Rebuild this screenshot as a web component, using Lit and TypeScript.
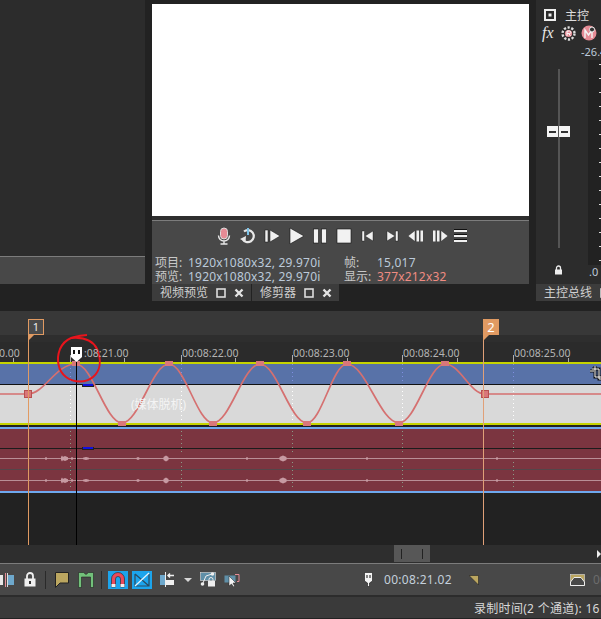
import { LitElement, html, css, svg } from 'lit';
import { customElement } from 'lit/decorators.js';

// key frames of the fade curve on the timeline canvas (canvas top is y=311 on the page)
const TOP = 311;
const PEAK = 364 - TOP;
const TROUGH = 423 - TOP;
const MID = 394 - TOP;
const curveXs = [76, 122, 169, 213, 260, 307, 347, 399, 445];
const majors = [70, 181, 292, 402, 513];
const minors = [13, 124, 235, 347, 457, 568];
const ticks = [4, 18, 32, 46, 60, 74, 88, 102, 116, 130, 144, 158, 172, 186, 200];
const stamps: [string, number][] = [
  ['0.00', -1],
  [':08:21.00', 84],
  ['00:08:22.00', 182],
  ['00:08:23.00', 293],
  ['00:08:24.00', 403],
  ['00:08:25.00', 514],
];
// small audio peaks: x, half width, half height
const blips = [
  [46, 1, 1.5], [62, 1, 3], [65, 3, 2.5], [72, 1, 1.5], [86, 3, 1.5], [138, 1.5, 1.5],
  [166, 2.5, 3], [247, 1, 1.5], [283, 3.5, 3], [367, 1, 1.5], [497, 1, 1.5],
];

function curvePath(): string {
  let d = `M0 ${MID} L28 ${MID} C44 ${MID} 56 ${PEAK} ${curveXs[0]} ${PEAK}`;
  for (let i = 1; i < curveXs.length; i++) {
    const a = curveXs[i - 1];
    const b = curveXs[i];
    const y = i % 2 ? TROUGH : PEAK;
    const prev = i % 2 ? PEAK : TROUGH;
    const k = (b - a) * 0.36;
    d += ` C${a + k} ${prev} ${b - k} ${y} ${b} ${y}`;
  }
  d += ` C460 ${PEAK} 470 ${MID} 485 ${MID} L601 ${MID}`;
  return d;
}

const squareIcon = html`<svg class="ico" width="10" height="10" viewBox="0 0 10 10"><rect x="1" y="1" width="8" height="8" fill="none" stroke="#ddd" stroke-width="1.600"/></svg>`;
const closeIcon = html`<svg class="ico" width="10" height="10" viewBox="0 0 10 10"><path d="M1.500 1.500 L8.500 8.500 M8.500 1.500 L1.500 8.500" stroke="#e4e4e4" stroke-width="2.400"/></svg>`;

const transport = [
  svg`<rect x="6.500" y="2" width="7" height="11" rx="3.500" fill="#e58b95" stroke="#ddd"/><path d="M4.500 9.500 a5.500 5.500 0 0 0 11 0 M10 15 V18 M6.500 18 H13.500" fill="none" stroke="#e8e8e8" stroke-width="1.400"/>`,
  svg`<path d="M6 5.500 A6 6 0 1 1 4.500 13" fill="none" stroke="#e8e8e8" stroke-width="2.200"/><path d="M2 13 L8 10 L7.500 16 Z" fill="#e8e8e8"/><rect x="9" y="2" width="2" height="7" fill="#7fc4e8"/>`,
  svg`<rect x="3" y="4" width="3" height="12" fill="#f0f0f0" stroke="#111" stroke-width=".5"/><path d="M8 4 L18 10 L8 16 Z" fill="#f0f0f0" stroke="#111" stroke-width=".5"/>`,
  svg`<path d="M4 2 L18 10 L4 18 Z" fill="#f2f2f2" stroke="#111" stroke-width=".6"/>`,
  svg`<rect x="3.500" y="3" width="5" height="14" fill="#f2f2f2" stroke="#111" stroke-width=".6"/><rect x="11.500" y="3" width="5" height="14" fill="#f2f2f2" stroke="#111" stroke-width=".6"/>`,
  svg`<rect x="3" y="3" width="14" height="14" fill="#f2f2f2" stroke="#111" stroke-width=".6"/>`,
  svg`<rect x="4" y="5" width="2.500" height="10" fill="#f0f0f0" stroke="#111" stroke-width=".4"/><path d="M15 5 V15 L7 10 Z" fill="#f0f0f0" stroke="#111" stroke-width=".4"/>`,
  svg`<rect x="13.500" y="5" width="2.500" height="10" fill="#f0f0f0" stroke="#111" stroke-width=".4"/><path d="M5 5 V15 L13 10 Z" fill="#f0f0f0" stroke="#111" stroke-width=".4"/>`,
  svg`<path d="M9 4.500 V15.500 L2 10 Z" fill="#f0f0f0" stroke="#111" stroke-width=".4"/><rect x="10.500" y="4.500" width="2.500" height="11" fill="#f0f0f0"/><rect x="14.500" y="4.500" width="2.500" height="11" fill="#f0f0f0"/>`,
  svg`<rect x="3" y="4.500" width="2.500" height="11" fill="#f0f0f0"/><rect x="7" y="4.500" width="2.500" height="11" fill="#f0f0f0"/><path d="M11 4.500 V15.500 L18 10 Z" fill="#f0f0f0" stroke="#111" stroke-width=".4"/>`,
];

@customElement('app-root')
export class AppRoot extends LitElement {
  static override styles = css`
    :host {
      display: block;
      width: 601px;
      height: 619px;
      overflow: hidden;
      background: #222;
      color: #c8c8c8;
      font: 12px "Noto Sans", "Noto Sans CJK SC", sans-serif;
    }
    .top { display: flex; height: 301px; margin-bottom: 10px; }
    .left { width: 145px; display: flex; flex-direction: column; height: 284px; margin-right: 7px; }
    .left-fill { flex: 1; background: #2c2c2c; }
    .left-bar { height: 27px; background: #484848; border-top: 1px solid #7c7c7c; }

    .preview { width: 377px; margin-right: 7px; display: flex; flex-direction: column; }
    .screen { height: 212px; margin-top: 4px; background: #fff; }
    .band { height: 4px; background: #2e2e2e; }
    .controls { height: 63px; background: #484848; border-top: 1px solid #7c7c7c; display: flex; flex-direction: column; }
    .transport { display: flex; justify-content: flex-end; gap: 4px; padding: 5px 62px 0 0; height: 20px; }
    .transport svg { display: block; }
    .menu { width: 13px; height: 13px; margin: 3px 0 0 0; display: flex; flex-direction: column; justify-content: space-between; }
    .menu i { display: block; height: 3px; background: #f0f0f0; border-top: 1px solid #111; box-sizing: border-box; }
    .info { display: grid; grid-template-columns: 33px 156px 33px auto; padding: 10px 0 0 3px; line-height: 14px; }
    .val { color: #bccada; letter-spacing: .2px; white-space: nowrap; }
    .val.alert { color: #f08c82; }
    .tabs { display: flex; height: 17px; }
    .tab { display: flex; align-items: center; background: #3c3c3c; padding: 0 7px 0 8px; height: 17px; line-height: 17px; color: #d0d0d0; white-space: nowrap; }
    .tab + .tab { margin-left: 1px; }
    .ico { display: block; margin-left: 8px; flex: none; }

    .right { flex: 1; min-width: 0; display: flex; flex-direction: column; }
    .master { position: relative; height: 284px; background: #2c2c2c; overflow: hidden; }
    .master-tab { width: 65px; overflow: hidden; padding: 0 0 0 8px; box-sizing: border-box; }
    .meter { position: absolute; left: 52px; top: 60px; width: 13px; height: 205px; background: #222; }
    .tick { position: absolute; right: 0; width: 2px; height: 1px; background: #ddd; }
    .head { position: absolute; left: 8px; top: 6px; display: flex; align-items: center; gap: 9px; color: #ddd; }
    .fx { position: absolute; left: 6px; top: 24px; display: flex; gap: 5px; align-items: center; }
    .fx em { font: italic 16px/18px "Liberation Serif", serif; color: #e8e8e8; width: 14px; }
    .db { position: absolute; left: 45px; top: 45px; color: #bccada; font-size: 11px; line-height: 14px; white-space: nowrap; width: 20px; overflow: hidden; }
    .db0 { position: absolute; left: 53px; top: 265px; color: #bccada; font-size: 11px; line-height: 14px; }
    .rail { position: absolute; left: 22px; top: 69px; width: 2px; height: 179px; background: #555; }
    .fader { position: absolute; left: 11px; top: 126px; width: 23px; height: 11px; display: flex; justify-content: space-between; }
    .fader span { display: flex; align-items: center; justify-content: center; width: 11px; height: 11px; background: #f4f4f4; }
    .fader i { display: block; width: 7px; height: 2px; background: #333; }
    .lock-m { position: absolute; left: 18px; top: 265px; }

    .timeline { position: relative; height: 234px; overflow: hidden; }
    .markbar { height: 24px; background: #383838; }
    .markband { height: 7px; background: #2e2e2e; }
    .ruler { height: 20px; background: #2b2b2b; }
    .yl { height: 1.5px; background: #c6d400; }
    .t-blue { height: 20.5px; background: #5872a8; }
    .sep { height: 1px; background: #111; }
    .t-grey { height: 38px; background: #d9d9d9; }
    .t-dark { height: 2px; background: #222; }
    .bl { height: 2px; background: #6ea8ee; }
    .t-red { height: 62px; background: #7b3540; }
    .canvas { position: absolute; left: 0; top: 0; width: 601px; height: 234px; }
    .stamp { position: absolute; top: 35px; font-size: 10.500px; line-height: 14px; color: #b4b4b4; white-space: nowrap; }
    .offline { position: absolute; left: 131px; top: 86px; color: #f4f4f4; line-height: 16px; white-space: nowrap; }
    .flag { position: absolute; top: 8px; width: 16px; height: 16px; box-sizing: border-box; display: flex; align-items: center; justify-content: center; border: 1px solid #e09a62; color: #eee; font-size: 11px; line-height: 14px; }
    .flag.dim { background: #4a4a4a; }
    .flag.full { background: #e09a62; color: #fff; font-size: 13px; }

    .scroll { height: 18px; background: #2e2e2e; display: flex; }
    .thumb { margin-left: 394px; width: 36px; height: 17px; background: #575757; display: flex; justify-content: space-between; align-items: center; padding: 0 7px; box-sizing: border-box; }
    .thumb i { display: block; width: 1px; height: 10px; background: #222; }
    .arrow { margin-left: auto; align-self: center; }
    .toolbar { height: 31px; background: #484848; border-top: 1px solid #7c7c7c; display: flex; align-items: center; }
    .tools { display: flex; align-items: center; flex: 1; }
    .tools svg { display: block; flex: none; }
    .on { background: #1ca4ec; }
    .bsep { width: 1px; height: 18px; background: #2a2a2a; flex: none; }
    .time { color: #c4d0dc; letter-spacing: .3px; margin-left: 11px; white-space: nowrap; }
    .time.off { color: #6c6c6c; margin-left: 8px; }
    .rule { height: 2px; background: #2c2c2c; }
    .status { height: 21px; background: #3a3a3a; padding-left: 474px; line-height: 24px; letter-spacing: .3px; color: #d8d8d8; white-space: nowrap; overflow: hidden; }
  `;

  renderCanvas() {
    const dotted = majors.map((x) => svg`
      <path d="M${x + 0.5} 53 V73" stroke="#7f8fe0" stroke-dasharray="1 3"/>
      <path d="M${x + 0.5} 76 V111" stroke="#fff" stroke-dasharray="1 3"/>
      <path d="M${x + 0.5} 120 V143" stroke="#8b9a86" stroke-dasharray="1 3"/>
      <path d="M${x + 0.5} 151 V178" stroke="#8b9a86" stroke-dasharray="1 3"/>
      <path d="M${x + 0.5} 44 V51" stroke="#aeaeae"/>`);
    const wave = [147, 169].map((y) => svg`
      <path d="M0 ${y + 0.5} H601" stroke="#b98f96"/>
      ${blips.map(([x, w, h]) => svg`<path d="M${x - w} ${y + 0.5 - h / 2} L${x} ${y + 0.5 - h} L${x + w} ${y + 0.5 - h / 2} V${y + 0.5 + h / 2} L${x} ${y + 0.5 + h} L${x - w} ${y + 0.5 + h / 2} Z" fill="#c79aa2"/>`)}`);
    const keys = curveXs.map((x, i) => svg`<rect x=${x - 4} y=${i % 2 ? TROUGH - 2 : PEAK - 3} width="8" height="5" fill="#d9777a"/>`);
    return html`<svg class="canvas" viewBox="0 0 601 234">
      ${minors.map((x) => svg`<path d="M${x + 0.5} 47 V51" stroke="#aeaeae"/>`)}
      ${dotted}
      <path d="M82 74.500 H94" stroke="#222" stroke-width="3"/>
      <path d="M83 74 H93" stroke="#1010e0" stroke-width="2"/>
      <path d="M0 137.500 H601" stroke="#1c1c1c"/>
      <path d="M0 158.500 H601" stroke="#54464a"/>
      <path d="M82 137.500 H94" stroke="#222" stroke-width="3"/>
      <path d="M83 137 H93" stroke="#1010e0" stroke-width="2"/>
      ${wave}
      <path d=${curvePath()} fill="none" stroke="#d57070" stroke-width="1.700"/>
      ${keys}
      <rect x="24.500" y="79.500" width="7" height="7" fill="#d9777a" stroke="#b85050"/>
      <rect x="481.500" y="79.500" width="7" height="7" fill="#d9777a" stroke="#b85050"/>
      <path d="M28.500 28 V234" stroke="#e09a62"/>
      <path d="M483.500 28 V234" stroke="#e0a078"/>
      <path d="M28 24 H34 L28 30 Z" fill="#e09a62"/>
      <path d="M483 24 H489 L483 30 Z" fill="#e09a62"/>
      <path d="M76.500 50 V234" stroke="#000"/>
      <path d="M71 36 H82 V46 L76.500 51 L71 46 Z" fill="#fff"/>
      <rect x="73" y="39" width="2" height="4" fill="#111"/><rect x="78" y="39" width="2" height="4" fill="#111"/>
      <path d="M87 24 C78 25 66 25 60 38 C56 48 58 60 66 66 C74 72 86 72 93 66 C100 60 102 50 97 38 C93 30 86 26 72 27" fill="none" stroke="#e8141c" stroke-width="2"/>
      <path d="M592 58 H599 V68 H601 M595 55 V66 H601 M590 60 H594" fill="none" stroke="#111" stroke-width="3"/>
      <path d="M592 58 H599 V68 H601 M595 55 V66 H601 M590 60 H594" fill="none" stroke="#fff"/>
    </svg>`;
  }

  override render() {
    return html`
      <div class="top">
        <div class="left"><div class="left-fill"></div><div class="left-bar"></div></div>
        <div class="preview">
          <div class="screen"></div>
          <div class="band"></div>
          <div class="controls">
            <div class="transport">
              ${transport.map((p) => html`<svg width="20" height="20" viewBox="0 0 20 20">${p}</svg>`)}
              <div class="menu"><i></i><i></i><i></i></div>
            </div>
            <div class="info">
              <span>项目:</span><span class="val">1920x1080x32, 29.970i</span><span>帧:</span><span class="val">15,017</span>
              <span>预览:</span><span class="val">1920x1080x32, 29.970i</span><span>显示:</span><span class="val alert">377x212x32</span>
            </div>
          </div>
          <div class="tabs">
            <div class="tab">视频预览${squareIcon}${closeIcon}</div>
            <div class="tab">修剪器${squareIcon}${closeIcon}</div>
          </div>
        </div>
        <div class="right">
          <div class="master">
            <div class="meter">${ticks.map((t) => html`<span class="tick" style="top:${t}px"></span>`)}</div>
            <div class="head">
              <svg width="12" height="12" viewBox="0 0 12 12"><rect x="1" y="1" width="10" height="10" fill="none" stroke="#eee" stroke-width="2"/><rect x="4.500" y="4.500" width="3" height="3" fill="#eee"/></svg>
              <span>主控</span>
            </div>
            <div class="fx">
              <em>fx</em>
              <svg width="15" height="15" viewBox="0 0 15 15"><circle cx="7.500" cy="7.500" r="6" fill="none" stroke="#ddd" stroke-width="2.400" stroke-dasharray="2.200 1.600"/><circle cx="7.500" cy="7.500" r="3.600" fill="#e58b95"/><path d="M6 10 V5 H8.500 a1.300 1.300 0 0 1 0 2.600 H6 M8 7.600 L9.500 10" fill="none" stroke="#fff"/></svg>
              <svg width="16" height="16" viewBox="0 0 16 16"><circle cx="8" cy="8" r="7.500" fill="#e58b95"/><path d="M4 13 V5 L7.500 10 L11 5 V13" fill="none" stroke="#f4f4f4" stroke-width="1.400"/><circle cx="11" cy="4.500" r="2.500" fill="#333" stroke="#eee"/></svg>
            </div>
            <div class="db">-26.4</div>
            <div class="rail"></div>
            <div class="fader"><span><i></i></span><span><i></i></span></div>
            <svg class="lock-m" width="9" height="10" viewBox="0 0 9 10"><path d="M2.500 5 V3 a2 2 0 0 1 4 0 V5" fill="none" stroke="#eee" stroke-width="1.300"/><rect x="1" y="4.500" width="7" height="5" fill="#eee"/></svg>
            <div class="db0">.0</div>
          </div>
          <div class="tab master-tab">主控总线${squareIcon}</div>
        </div>
      </div>

      <div class="timeline">
        <div class="markbar"></div>
        <div class="markband"></div>
        <div class="ruler"></div>
        <div class="yl"></div>
        <div class="t-blue"></div>
        <div class="sep"></div>
        <div class="t-grey"></div>
        <div class="yl"></div>
        <div class="t-dark"></div>
        <div class="bl"></div>
        <div class="t-red"></div>
        <div class="bl"></div>
        ${this.renderCanvas()}
        ${stamps.map(([t, x]) => html`<span class="stamp" style="left:${x}px">${t}</span>`)}
        <div class="offline">(媒体脱机)</div>
        <div class="flag dim" style="left:28px">1</div>
        <div class="flag full" style="left:483px">2</div>
      </div>

      <div class="scroll">
        <div class="thumb"><i></i><i></i></div>
        <svg class="arrow" width="4" height="8" viewBox="0 0 4 8"><path d="M0 0 L4 4 L0 8 Z" fill="#eee"/></svg>
      </div>
      <div class="toolbar">
        <div class="tools">
          <svg width="14" height="16" viewBox="0 0 14 16"><rect x="0" y="3" width="3" height="10" fill="#e8e8e8"/><rect x="8" y="3" width="6" height="10" fill="#6ea8cc"/><path d="M5.500 1 V15" stroke="#e58b95"/><path d="M7.500 1 V15" stroke="#ddd"/></svg>
          <svg style="margin-left:10px" width="12" height="15" viewBox="0 0 12 15"><path d="M3 7 V4 a3 3 0 0 1 6 0 V7" fill="none" stroke="#f0f0f0" stroke-width="1.800"/><rect x="0.500" y="6.500" width="11" height="8" fill="#f0f0f0"/><rect x="5" y="9" width="2" height="3" fill="#333"/></svg>
          <div class="bsep" style="margin-left:9px"></div>
          <svg style="margin-left:9px" width="14" height="16" viewBox="0 0 14 16"><path d="M0.500 0.500 H13.500 V11 H5 L0.500 15.500 Z" fill="#bba660" stroke="#222"/></svg>
          <svg style="margin-left:9px" width="16" height="16" viewBox="0 0 16 16"><path d="M0.500 0.500 H5.500 L8 2.500 L10.500 0.500 H15.500 V15.500 H12.500 V5 H3.500 V15.500 H0.500 Z" fill="#72c07a" stroke="#222" stroke-width=".6"/></svg>
          <div class="bsep" style="margin-left:7px"></div>
          <svg class="on" style="margin-left:6px" width="20" height="18" viewBox="0 0 20 18"><path d="M3.500 16 V8 a6.500 6.500 0 0 1 13 0 V16 H12.500 V8 a2.500 2.500 0 0 0 -5 0 V16 Z" fill="#ea4a5a" stroke="#222" stroke-width=".6"/><rect x="3.500" y="13" width="4" height="3" fill="#eee"/><rect x="12.500" y="13" width="4" height="3" fill="#eee"/></svg>
          <svg class="on" style="margin-left:4px" width="20" height="18" viewBox="0 0 20 18"><path d="M3 3 V15 H17 V3 M3 3 L17 15" fill="none" stroke="#2a4a60" stroke-width="1.200"/><path d="M17 2 L3 15" fill="none" stroke="#e8f4fc" stroke-width="1.200"/></svg>
          <svg style="margin-left:7px" width="16" height="15" viewBox="0 0 16 15"><rect x="1" y="3" width="5" height="10" fill="#6ea8cc"/><rect x="6" y="8" width="9" height="5" fill="#f0f0f0"/><path d="M6.500 0 V15" stroke="#eee"/><path d="M15 3.500 H9 M11 1.500 L9 3.500 L11 5.500" fill="none" stroke="#f0f0f0" stroke-width="1.500"/></svg>
          <svg style="margin-left:9px" width="8" height="4" viewBox="0 0 8 4"><path d="M0 0 H8 L4 4 Z" fill="#d8d8d8"/></svg>
          <svg style="margin-left:8px" width="16" height="15" viewBox="0 0 16 15"><rect x="0.500" y="0.500" width="15" height="8" fill="#5f8fa8" stroke="#ddd" stroke-width=".6"/><path d="M3 11 L6 4 L12 2" fill="none" stroke="#eee"/><circle cx="2.500" cy="12" r="1.800" fill="#eee"/><circle cx="12.500" cy="2" r="1.800" fill="#eee"/><path d="M9 9 V7.500 a2 2 0 0 1 4 0 V9" fill="none" stroke="#eee"/><rect x="8" y="9" width="7" height="5.500" fill="#eee"/></svg>
          <svg style="margin-left:8px" width="16" height="14" viewBox="0 0 16 14"><rect x="0.500" y="2.500" width="11" height="7" fill="#5f8fa8"/><path d="M11 1.500 H15 V8.500 H13" fill="none" stroke="#e58b95"/><path d="M5 3 V13 L7.500 11 L9.500 14 L10.500 13 L9 10 L12 10 Z" fill="#f4f4f4" stroke="#222" stroke-width=".5"/></svg>
          <svg style="margin-left:124px" width="9" height="15" viewBox="0 0 9 15"><path d="M0.500 0.500 H8.500 V9 L5.500 11 V14.500 H3.500 V11 L0.500 9 Z" fill="#f4f4f4" stroke="#111" stroke-width=".6"/><rect x="2.500" y="3" width="1" height="3" fill="#111"/><rect x="5.500" y="3" width="1" height="3" fill="#111"/></svg>
          <span class="time">00:08:21.02</span>
          <svg style="margin-left:17px" width="10" height="10" viewBox="0 0 10 10"><path d="M0 0.500 H9.500 V10 Z" fill="#bba660" stroke="#222" stroke-width=".6"/></svg>
          <svg style="margin-left:91px" width="15" height="12" viewBox="0 0 15 12"><rect x="0.500" y="0.500" width="14" height="11" fill="#bba660" stroke="#ddd" stroke-width=".6"/><path d="M0.500 11.500 V8 L4 3.500 H11 L14.500 8 V11.500 Z" fill="#484848" stroke="#eee"/></svg>
          <span class="time off">00</span>
        </div>
      </div>
      <div class="rule"></div>
      <div class="status">录制时间(2 个通道): 16</div>
    `;
  }
}
